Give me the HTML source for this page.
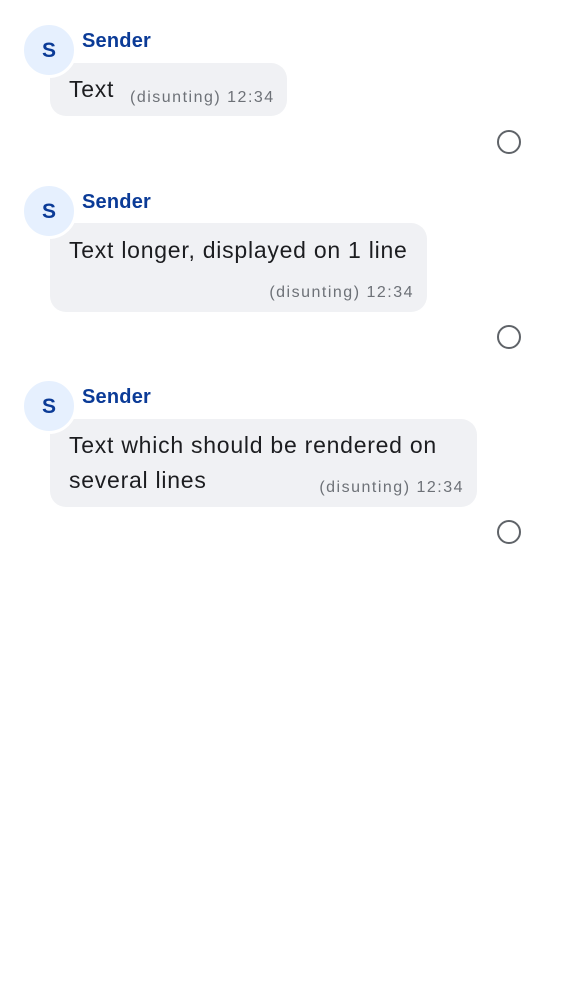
<!DOCTYPE html>
<html><head><meta charset="utf-8"><style>
body{margin:0;width:562px;height:1000px;background:#fff;position:relative;font-family:"Liberation Sans",Roboto,sans-serif;overflow:hidden}
.av{position:absolute;left:24px;width:50px;height:50px;border-radius:50%;background:#e6f0fe;border:3px solid #fff;box-sizing:content-box;margin-left:-3px;margin-top:-3px;z-index:2;color:#0b3b97;font-weight:bold;font-size:21px;text-align:center;line-height:52px}
.sn{position:absolute;left:82px;color:#0b3b97;font-size:20px;font-weight:bold;letter-spacing:0.2px}
.b{position:absolute;left:50px;background:#f0f1f4;border-radius:16px;z-index:1}
.t{position:absolute;left:69px;color:#1c1d20;font-size:23px;letter-spacing:0.75px;line-height:35px;z-index:3;white-space:nowrap}
.m{position:absolute;color:#6d7177;font-size:16px;letter-spacing:1.5px;z-index:3;white-space:nowrap}
.r{position:absolute;left:497px;width:20px;height:20px;border:2.5px solid #5f6368;border-radius:50%}
</style></head><body>
<div class="av" style="top:25px">S</div>
<div class="sn" style="top:30px">Sender</div>
<div class="b" style="top:63px;width:237px;height:53px"></div>
<div class="t" style="top:72px">Text</div>
<div class="m" style="top:89px;left:130px">(disunting) 12:34</div>
<div class="r" style="top:130px"></div>

<div class="av" style="top:186px">S</div>
<div class="sn" style="top:191px">Sender</div>
<div class="b" style="top:223px;width:377px;height:89px"></div>
<div class="t" style="top:233px">Text longer, displayed on 1 line</div>
<div class="m" style="top:284px;right:148px">(disunting) 12:34</div>
<div class="r" style="top:325px"></div>

<div class="av" style="top:381px">S</div>
<div class="sn" style="top:386px">Sender</div>
<div class="b" style="top:419px;width:427px;height:88px"></div>
<div class="t" style="top:428px">Text which should be rendered on<br>several lines</div>
<div class="m" style="top:479px;right:98px">(disunting) 12:34</div>
<div class="r" style="top:520px"></div>
</body></html>
